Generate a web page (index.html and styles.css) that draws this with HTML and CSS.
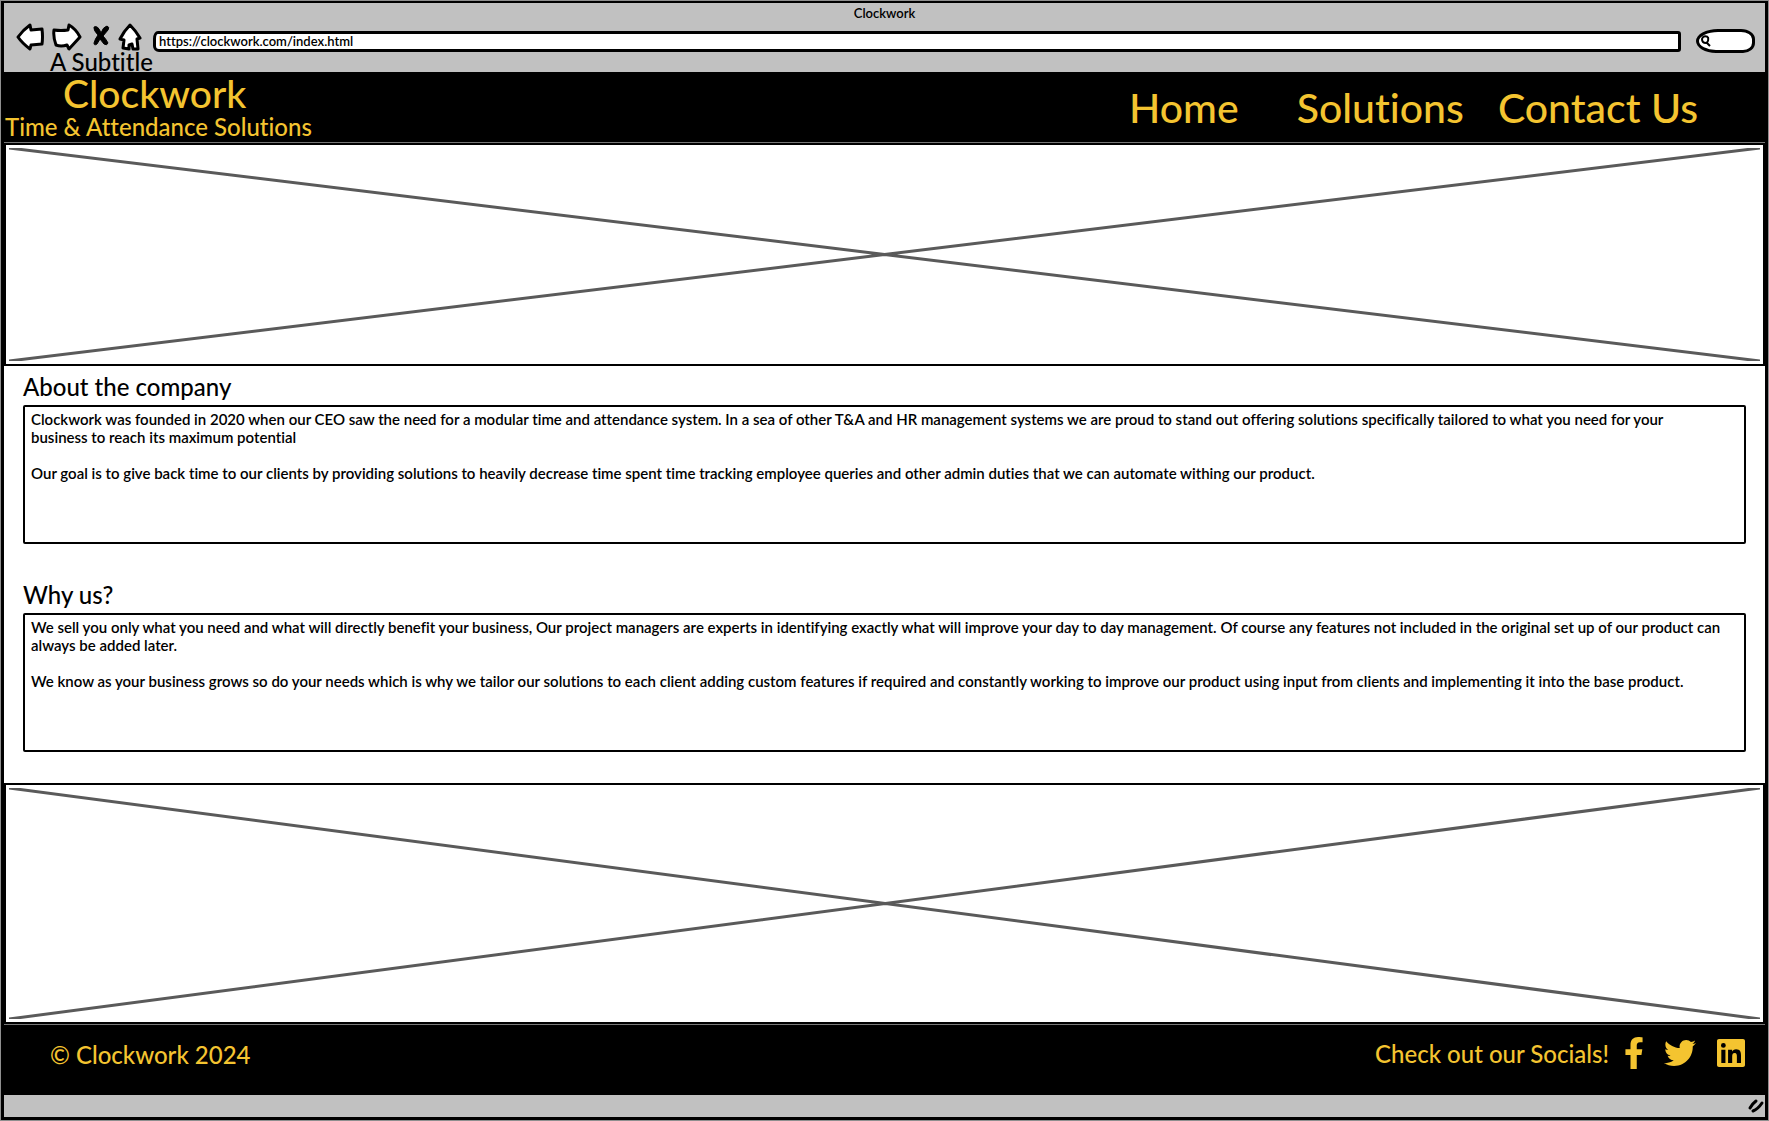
FILE: index.html
```html
<!DOCTYPE html>
<html lang="en">
<head>
<meta charset="utf-8">
<meta name="viewport" content="width=device-width, initial-scale=1">
<title>Clockwork</title>
<link rel="stylesheet" href="styles.css">
</head>
<body>
<div class="window">
  <div class="chrome">
    <div class="window-title">Clockwork</div>
    <div class="toolbar">
      <div class="controls">
        <button class="control" type="button" aria-label="Back"><svg width="28" height="28" viewBox="0 0 28 28"><path d="M2 14Q7 7 14 2l1 5 11-1q1 8 0 15l-11 1-1 4Q6 20 2 14Z"/></svg></button>
        <button class="control" type="button" aria-label="Forward"><svg width="30" height="28" viewBox="0 0 30 28"><path d="M2 7q7 1 14 0l1-5q7 4 11 12l-11 12-2-4Q9 24 4 22 1 14 2 7Z"/></svg></button>
        <button class="control control-stop" type="button" aria-label="Stop"><svg width="18" height="22" viewBox="0 0 18 22"><path class="solid" d="M2 2q4-2 7 6 2-6 6-7 3 1 1 4l-5 6q3 3 5 7-1 3-4 1l-4-5-3 5q-3 2-3-1 1-4 4-8Q1 5 2 2Z"/></svg></button>
        <button class="control" type="button" aria-label="Home"><svg width="24" height="28" viewBox="0 0 24 28"><path d="M12 2q6 6 10 13l-3 1 1 10h-5l-1-5-3 1v4l-6-1 1-8-4-1Q6 8 12 2Z"/></svg></button>
      </div>
      <input class="address" type="text" aria-label="Address" value="https://clockwork.com/index.html">
      <label class="search">
        <svg width="12" height="14" viewBox="0 0 12 14"><path d="M8 3Q3 1 2 5q0 4 4 4 3-1 2-6M7 9l3 3"/></svg>
        <input class="search-input" type="search" aria-label="Search">
      </label>
    </div>
    <div class="subtitle">A Subtitle</div>
  </div>

  <header class="site-header">
    <div class="brand">
      <h1 class="brand-name">Clockwork</h1>
      <p class="tagline">Time &amp; Attendance Solutions</p>
    </div>
    <nav class="nav">
      <a class="nav-link" href="#home">Home</a>
      <a class="nav-link" href="#solutions">Solutions</a>
      <a class="nav-link" href="#contact">Contact Us</a>
    </nav>
  </header>

  <svg class="picture" viewBox="0 0 100 100" preserveAspectRatio="none" aria-hidden="true"><path d="M0 0 100 100M0 100 100 0"/></svg>

  <main class="content">
    <section class="section">
      <h2 class="heading">About the company</h2>
      <div class="panel">
        <p>Clockwork was founded in 2020 when our CEO saw the need for a modular time and attendance system. In a sea of other T&amp;A and HR management systems we are proud to stand out offering solutions specifically tailored to what you need for your<br>business to reach its maximum potential</p>
        <p>Our goal is to give back time to our clients by providing solutions to heavily decrease time spent time tracking employee queries and other admin duties that we can automate withing our product.</p>
      </div>
    </section>
    <section class="section">
      <h2 class="heading">Why us?</h2>
      <div class="panel">
        <p>We sell you only what you need and what will directly benefit your business, Our project managers are experts in identifying exactly what will improve your day to day management. Of course any features not included in the original set up of our product can always be added later.</p>
        <p>We know as your business grows so do your needs which is why we tailor our solutions to each client adding custom features if required and constantly working to improve our product using input from clients and implementing it into the base product.</p>
      </div>
    </section>
  </main>

  <svg class="picture picture-tall" viewBox="0 0 100 100" preserveAspectRatio="none" aria-hidden="true"><path d="M0 0 100 100M0 100 100 0"/></svg>

  <footer class="site-footer">
    <p class="copyright">© Clockwork 2024</p>
    <div class="socials">
      <span>Check out our Socials!</span>
      <a class="social" href="#facebook" aria-label="Facebook"><svg width="18" height="32" viewBox="22 0 276 512"><path d="M279 288l14-93h-89v-60c0-25 12-50 52-50h41V6s-37-6-72-6c-73 0-121 44-121 125v70H23v93h81v224h100V288z"/></svg></a>
      <a class="social" href="#twitter" aria-label="Twitter"><svg width="32" height="32" viewBox="0 0 512 512"><path d="M459.370 151.716c.325 4.548.325 9.097.325 13.645 0 138.720-105.583 298.558-298.558 298.558-59.452 0-114.680-17.219-161.137-47.106 8.447.974 16.568 1.299 25.340 1.299 49.055 0 94.213-16.568 130.274-44.832-46.132-.975-84.792-31.188-98.112-72.772 6.498.974 12.995 1.624 19.818 1.624 9.421 0 18.843-1.300 27.614-3.573-48.081-9.747-84.143-51.980-84.143-102.985v-1.299c13.969 7.797 30.214 12.670 47.431 13.319-28.264-18.843-46.781-51.005-46.781-87.391 0-19.492 5.197-37.360 14.294-52.954 51.655 63.675 129.300 105.258 216.365 109.807-1.624-7.797-2.599-15.918-2.599-24.040 0-57.828 46.782-104.934 104.934-104.934 30.213 0 57.502 12.670 76.670 33.137 23.715-4.548 46.456-13.320 66.599-25.340-7.798 24.366-24.366 44.833-46.132 57.827 21.117-2.273 41.584-8.122 60.426-16.243-14.292 20.791-32.161 39.308-52.628 54.253z"/></svg></a>
      <a class="social" href="#linkedin" aria-label="LinkedIn"><svg width="28" height="28" viewBox="0 32 448 448"><path d="M416 32H32C14 32 0 47 0 64v384c0 18 14 32 32 32h384c18 0 32-14 32-32V64c0-17-14-32-32-32zM135 416H69V202h66zM102 173a38 38 0 1 1 0-77 38 38 0 0 1 0 77zm282 243h-66V312c0-25-1-57-35-57s-40 27-40 55v106h-66V202h64v29h1c9-17 30-35 63-35 67 0 79 44 79 102z"/></svg></a>
    </div>
  </footer>

  <div class="status-bar">
    <svg width="18" height="16" viewBox="0 0 18 16"><path d="M3 10Q5 6 9 3M6 13q5-2 9-8"/></svg>
  </div>
</div>
</body>
</html>
```
FILE: styles.css
```css
* { box-sizing: border-box; }

body {
  margin: 0;
  padding: 1px;
  background: #8f8f8f;
  color: #000;
  font-family: Lato, "Open Sans", sans-serif;
  font-weight: 500;
  font-variant-ligatures: none;
}

h1, h2, p { margin: 0; font-weight: inherit; }
button { padding: 0; border: 0; background: none; }
a { color: inherit; text-decoration: none; }
svg { display: block; }

.window {
  display: flex;
  flex-direction: column;
  min-height: calc(100vh - 2px);
  border: 3px solid #000;
  border-top-width: 2px;
  background: #fff;
}

.chrome { height: 69px; background: #c1c1c1; }
.window-title { padding-top: 2px; font-size: 13px; font-weight: 600; line-height: 16px; text-align: center; }

.toolbar { display: flex; align-items: flex-start; padding: 2px 10px 0 12px; }
.controls { display: flex; align-items: flex-start; gap: 8px; margin-right: 11px; }
.control path { fill: #fff; stroke: #000; stroke-width: 3; stroke-linejoin: round; }
.control-stop { padding: 2px 0 0 2px; }
.control .solid { fill: #000; stroke-width: 1; }

.address {
  flex: 1;
  min-width: 0;
  height: 21px;
  margin-top: 8px;
  padding: 0 3px 2px;
  border: 3px solid #000;
  border-radius: 5px 3px 3px 6px / 8px 3px 3px 6px;
  background: #fff;
  color: #000;
  font: inherit;
  font-size: 13px;
  font-weight: 600;
}

.search {
  display: flex;
  align-items: center;
  width: 59px;
  height: 24px;
  margin: 6px 0 0 15px;
  padding-left: 1px;
  border: 3px solid #000;
  border-radius: 22px 14px 12px 20px / 12px 10px 10px 12px;
  background: #fff;
}
.search path { fill: none; stroke: #000; stroke-width: 2; }
.search-input { width: 30px; height: 14px; padding: 0; border: 0; background: none; }

.subtitle { padding-left: 46px; font-size: 24px; line-height: 18px; }

.site-header {
  display: flex;
  justify-content: space-between;
  height: 71px;
  border-bottom: 1px solid #777;
  background: #000;
  color: #f4c430;
}
.brand { padding-left: 1px; }
.brand-name { padding-left: 58px; font-size: 39px; line-height: 42px; }
.tagline { font-size: 24px; line-height: 26px; }
.nav { display: flex; align-items: center; padding-right: 67px; font-size: 41px; }
.nav-link + .nav-link { margin-left: 34px; }
.nav-link:nth-child(2) { margin-left: 58px; }

.picture {
  width: 100%;
  height: 223px;
  padding: 3px;
  border: 2px solid #000;
  overflow: hidden;
}
.picture-tall { height: 241px; }
.picture path { stroke: #5a5a5a; stroke-width: 3; vector-effect: non-scaling-stroke; }

.content {
  display: flex;
  flex-direction: column;
  gap: 32px;
  padding: 2px 19px 31px;
}
.heading { font-size: 24px; line-height: 37px; }
.panel {
  display: flex;
  flex-direction: column;
  gap: 18px;
  min-height: 139px;
  padding: 3px 6px;
  border: 2px solid #000;
  border-radius: 2px;
  font-size: 15px;
  font-weight: 600;
  line-height: 18px;
}

.site-footer {
  display: flex;
  align-items: center;
  justify-content: space-between;
  height: 71px;
  padding: 0 20px 14px 46px;
  border-top: 1px solid #777;
  background: #000;
  color: #f4c430;
  font-size: 24px;
}
.copyright { padding-top: 2px; }
.socials { display: flex; align-items: center; }
.social { margin-left: 16px; }
.social + .social { margin-left: 21px; }
.social path { fill: currentColor; }

.status-bar {
  display: flex;
  flex: 1;
  align-items: center;
  justify-content: flex-end;
  background: #c1c1c1;
}
.status-bar path { fill: none; stroke: #000; stroke-width: 3; stroke-linecap: round; }
```
